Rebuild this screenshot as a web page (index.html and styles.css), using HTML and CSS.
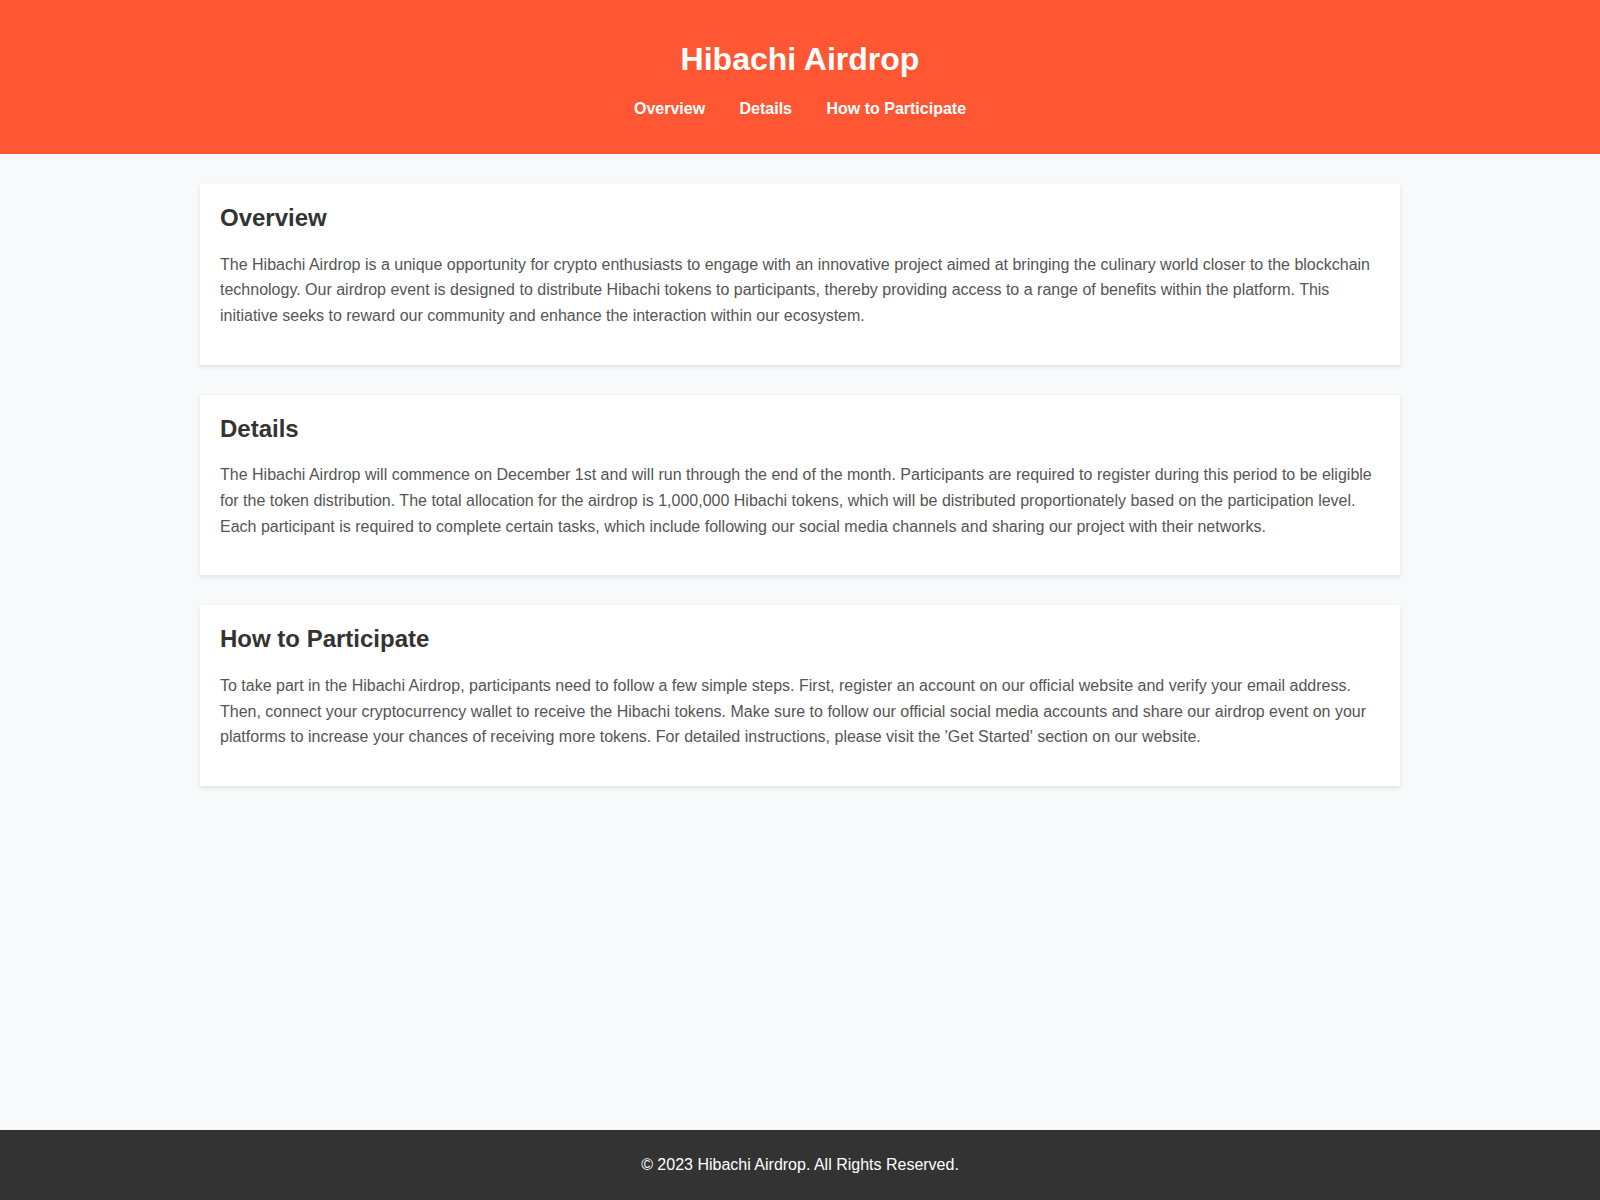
FILE: index.html
```html
<!DOCTYPE html>
<html lang="en">
<head>
  <meta charset="UTF-8">
  <title>Hibachi Airdrop</title>
  <link rel="stylesheet" href="styles.css">
</head>
<body>

  <header class="header">
    <h1>Hibachi Airdrop</h1>
    <ul class="nav">
      <li><a href="#overview">Overview</a></li>
      <li><a href="#details">Details</a></li>
      <li><a href="#participate">How to Participate</a></li>
    </ul>
  </header>

  <main class="container">
    <section class="card" id="overview">
      <h2>Overview</h2>
      <p>The Hibachi Airdrop is a unique opportunity for crypto enthusiasts to engage with an innovative project aimed at bringing the culinary world closer to the blockchain technology. Our airdrop event is designed to distribute Hibachi tokens to participants, thereby providing access to a range of benefits within the platform. This initiative seeks to reward our community and enhance the interaction within our ecosystem.</p>
    </section>

    <section class="card" id="details">
      <h2>Details</h2>
      <p>The Hibachi Airdrop will commence on December 1st and will run through the end of the month. Participants are required to register during this period to be eligible for the token distribution. The total allocation for the airdrop is 1,000,000 Hibachi tokens, which will be distributed proportionately based on the participation level. Each participant is required to complete certain tasks, which include following our social media channels and sharing our project with their networks.</p>
    </section>

    <section class="card" id="participate">
      <h2>How to Participate</h2>
      <p>To take part in the Hibachi Airdrop, participants need to follow a few simple steps. First, register an account on our official website and verify your email address. Then, connect your cryptocurrency wallet to receive the Hibachi tokens. Make sure to follow our official social media accounts and share our airdrop event on your platforms to increase your chances of receiving more tokens. For detailed instructions, please visit the 'Get Started' section on our website.</p>
    </section>
  </main>

  <footer class="footer">
    <p>&copy; 2023 Hibachi Airdrop. All Rights Reserved.</p>
  </footer>

</body>
</html>
```

FILE: styles.css
```css
body {
  font-family: Arial, "Liberation Sans", sans-serif;
  margin: 0;
  min-height: 100vh;
  display: flex;
  flex-direction: column;
  background: #f8f9fa;
  color: #333;
}

.header {
  background: #ff5733;
  color: white;
  text-align: center;
  padding: 20px;
}

.nav {
  list-style: none;
  padding: 0;
}

.nav li {
  display: inline;
  margin: 0 15px;
}

.nav a {
  color: white;
  text-decoration: none;
  font-weight: bold;
}

.container {
  flex: 1;
  width: 100%;
  max-width: 1200px;
  margin: 30px auto;
  box-sizing: border-box;
}

.card {
  background: white;
  padding: 20px;
  margin-bottom: 30px;
  box-shadow: 0 2px 4px rgba(0, 0, 0, 0.1);
}

.card h2 {
  margin-top: 0;
  color: #333;
}

.card p {
  line-height: 1.6;
  color: #555;
}

.footer {
  background: #333;
  color: white;
  text-align: center;
  padding: 10px;
}
```
